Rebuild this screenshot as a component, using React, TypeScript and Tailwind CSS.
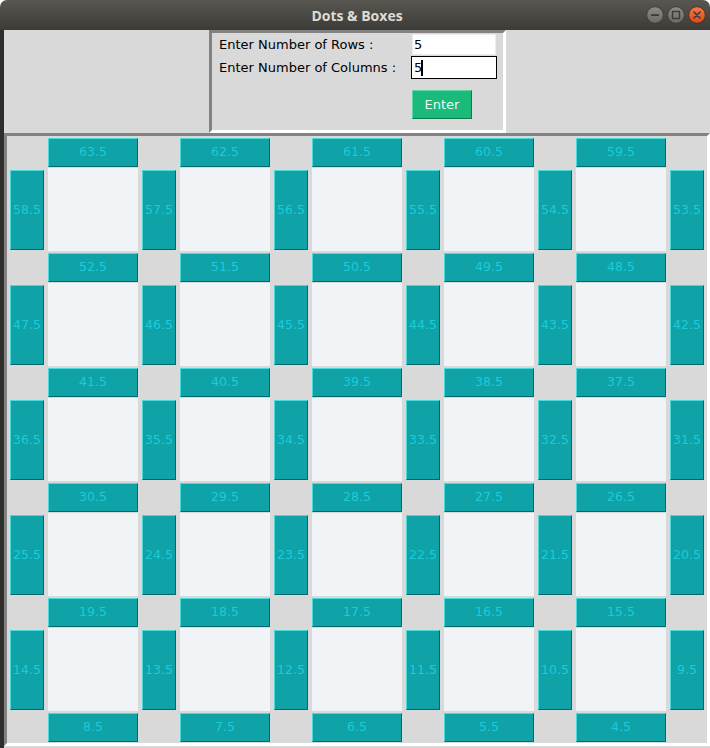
import React from "react";

const HBtn = ({ v }: { v: string }) => (
  <div className="w-[90px] h-[29px] flex items-center justify-center bg-[#0fa2a6] border border-t-[#4fd8da] border-l-[#4fd8da] border-b-[#07686b] border-r-[#07686b] text-[12.5px] text-[#1ccadc]">
    {v}
  </div>
);

const VBtn = ({ v }: { v: string }) => (
  <div className="w-[34px] h-[80px] mt-[2px] flex items-center justify-center bg-[#0fa2a6] border border-t-[#4fd8da] border-l-[#4fd8da] border-b-[#07686b] border-r-[#07686b] text-[12.5px] text-[#1ccadc]">
    {v}
  </div>
);

const Box = () => <div className="w-[90px] h-[83px] bg-[#f0f4f7]" />;

const fmt = (n: number) => n.toFixed(1);

export default function App() {
  const hRows = [0, 1, 2, 3, 4, 5];
  const vRows = [0, 1, 2, 3, 4];
  return (
    <div className="w-[710px] h-[748px] bg-white overflow-hidden font-['DejaVu_Sans',sans-serif] text-black">
      {/* Title bar */}
      <div className="relative h-[30px] rounded-t-[7px] bg-gradient-to-b from-[#595751] to-[#3c3b37] flex items-center justify-center">
        <span className="font-['Open_Sans',sans-serif] font-bold text-[14px] text-[#dfdbd2] ml-[4px]">Dots &amp; Boxes</span>
        <div className="absolute right-[4px] top-[6px] flex gap-[3px]">
          <svg width="18" height="18" viewBox="0 0 18 18">
            <defs>
              <linearGradient id="g1" x1="0" y1="0" x2="0" y2="1">
                <stop offset="0" stopColor="#8d8b85" />
                <stop offset="1" stopColor="#6b6964" />
              </linearGradient>
              <linearGradient id="g2" x1="0" y1="0" x2="0" y2="1">
                <stop offset="0" stopColor="#f47a45" />
                <stop offset="1" stopColor="#dd4814" />
              </linearGradient>
            </defs>
            <circle cx="9" cy="9" r="8.3" fill="url(#g1)" stroke="#3a3935" strokeWidth="0.8" />
            <rect x="5" y="8.2" width="8" height="1.8" fill="#3c3b37" />
          </svg>
          <svg width="18" height="18" viewBox="0 0 18 18">
            <circle cx="9" cy="9" r="8.3" fill="url(#g1)" stroke="#3a3935" strokeWidth="0.8" />
            <rect x="5.5" y="5.5" width="7" height="7" fill="none" stroke="#3c3b37" strokeWidth="1.4" />
          </svg>
          <svg width="18" height="18" viewBox="0 0 18 18">
            <circle cx="9" cy="9" r="8.3" fill="url(#g2)" stroke="#4a2a1a" strokeWidth="0.8" />
            <path d="M6 6 L12 12 M12 6 L6 12" stroke="#3c3b37" strokeWidth="1.6" strokeLinecap="round" />
          </svg>
        </div>
      </div>

      <div className="flex h-[718px]">
        <div className="w-[4px] bg-[#2f2e2b]" />
        <div className="w-[706px] flex flex-col bg-[#d9d9d9]">
          {/* Top form area */}
          <div className="h-[103px] flex">
            <div className="ml-[205px] w-[297px] h-[103px] border-[3px] border-t-[#828282] border-l-[#828282] border-b-white border-r-white flex flex-col text-[13px]">
              <div className="flex h-[23px] items-center">
                <span className="w-[199px] pl-[7px] leading-none">Enter Number of Rows :</span>
                <div className="w-[86px] h-[23px] p-[1px]">
                  <div className="h-[21px] border border-[#ececec] bg-white pl-[1px] flex items-center leading-none">5</div>
                </div>
              </div>
              <div className="flex h-[23px] items-center">
                <span className="w-[199px] pl-[7px] leading-none">Enter Number of Columns :</span>
                <div className="w-[86px] h-[23px] border border-black">
                  <div className="h-[21px] bg-white pl-[2px] flex items-center leading-none">
                    5<span className="inline-block w-[2px] h-[16px] bg-black ml-[-1px]" />
                  </div>
                </div>
              </div>
              <div className="mt-[11px] ml-[200px] w-[60px] h-[29px] bg-[#1abb7a] border border-t-[#5cd6a4] border-l-[#5cd6a4] border-b-[#0f7a4e] border-r-[#0f7a4e] flex items-center justify-center text-[#eef8f3] text-[13px]">
                Enter
              </div>
            </div>
          </div>

          {/* Board */}
          <div className="h-[613px] border-[3px] border-t-[#828282] border-l-[#828282] border-b-white border-r-white">
            <div className="flex flex-col pl-[3px] pt-[2px]">
              {hRows.map((i) => (
                <React.Fragment key={i}>
                  <div className="flex h-[29px] gap-[4px]">
                    {[0, 1, 2, 3, 4].map((j) => (
                      <React.Fragment key={j}>
                        <div className="w-[34px]" />
                        <HBtn v={fmt(63.5 - 11 * i - j)} />
                      </React.Fragment>
                    ))}
                  </div>
                  {i < 5 && vRows.includes(i) && (
                    <div className="flex h-[83px] mt-[1px] mb-[2px] gap-[4px] items-start">
                      {[0, 1, 2, 3, 4].map((j) => (
                        <React.Fragment key={j}>
                          <VBtn v={fmt(58.5 - 11 * i - j)} />
                          <Box />
                        </React.Fragment>
                      ))}
                      <VBtn v={fmt(58.5 - 11 * i - 5)} />
                    </div>
                  )}
                </React.Fragment>
              ))}
            </div>
          </div>
        </div>
      </div>
    </div>
  );
}
